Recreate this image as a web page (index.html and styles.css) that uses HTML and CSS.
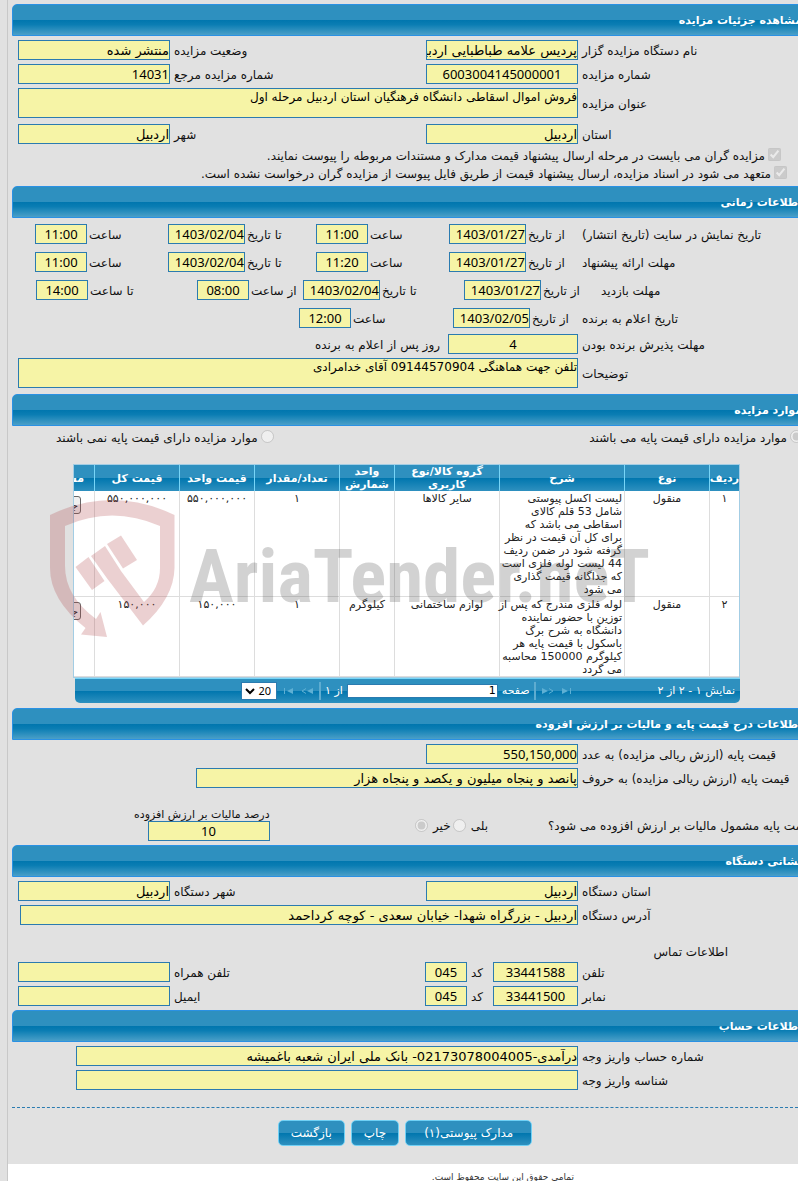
FILE: index.html
```html
<!DOCTYPE html>
<html lang="fa" dir="rtl">
<head>
<meta charset="utf-8">
<title>مشاهده جزئیات مزایده</title>
<link rel="stylesheet" href="styles.css">
</head>
<body>
<main class="panel">
  <section>
    <h2 class="bar">مشاهده جزئیات مزایده</h2>
    <div class="rows">
      <div class="row">
        <label class="lead" for="org">نام دستگاه مزایده گزار</label>
        <input class="field half" id="org" readonly value="پردیس علامه طباطبایی اردبیل">
        <label class="grow" for="status">وضعیت مزایده</label>
        <input class="field half" id="status" readonly value="منتشر شده">
      </div>
      <div class="row">
        <label class="lead" for="no">شماره مزایده</label>
        <input class="field half num center" id="no" readonly value="6003004145000001">
        <label class="grow" for="ref">شماره مزایده مرجع</label>
        <input class="field half num" id="ref" readonly value="14031">
      </div>
      <div class="row">
        <label class="lead" for="title">عنوان مزایده</label>
        <textarea class="field area" id="title" readonly>فروش اموال اسقاطی دانشگاه فرهنگیان استان اردبیل مرحله اول</textarea>
      </div>
      <div class="row spaced">
        <label class="lead" for="prov">استان</label>
        <input class="field half" id="prov" readonly value="اردبیل">
        <label class="grow" for="city">شهر</label>
        <input class="field half" id="city" readonly value="اردبیل">
      </div>
      <div class="checks">
        <label class="check inset"><input type="checkbox" checked disabled>مزایده گران می بایست در مرحله ارسال پیشنهاد قیمت مدارک و مستندات مربوطه را پیوست نمایند.</label>
        <label class="check"><input type="checkbox" checked disabled>متعهد می شود در اسناد مزایده، ارسال پیشنهاد قیمت از طریق فایل پیوست از مزایده گران درخواست نشده است.</label>
      </div>
    </div>
  </section>

  <section>
    <h2 class="bar">اطلاعات زمانی</h2>
    <div class="rows times">
      <div class="time">
        <span class="lead">تاریخ نمایش در سایت (تاریخ انتشار)</span>
        <label class="from" for="t1">از تاریخ</label><input class="field num date" id="t1" readonly value="1403/01/27">
        <label class="hour" for="t2">ساعت</label><input class="field num clock" id="t2" readonly value="11:00">
        <label class="to" for="t3">تا تاریخ</label><input class="field num date" id="t3" readonly value="1403/02/04">
        <label class="hour" for="t4">ساعت</label><input class="field num clock" id="t4" readonly value="11:00">
      </div>
      <div class="time">
        <span class="lead">مهلت ارائه پیشنهاد</span>
        <label class="from" for="t5">از تاریخ</label><input class="field num date" id="t5" readonly value="1403/01/27">
        <label class="hour" for="t6">ساعت</label><input class="field num clock" id="t6" readonly value="11:20">
        <label class="to" for="t7">تا تاریخ</label><input class="field num date" id="t7" readonly value="1403/02/04">
        <label class="hour" for="t8">ساعت</label><input class="field num clock" id="t8" readonly value="11:00">
      </div>
      <div class="time visit">
        <span class="lead">مهلت بازدید</span>
        <label class="from" for="t9">از تاریخ</label><input class="field num date" id="t9" readonly value="1403/01/27">
        <label class="to" for="t10">تا تاریخ</label><input class="field num date" id="t10" readonly value="1403/02/04">
        <label class="since" for="t11">از ساعت</label><input class="field num clock" id="t11" readonly value="08:00">
        <label class="until" for="t12">تا ساعت</label><input class="field num clock" id="t12" readonly value="14:00">
      </div>
      <div class="time winner">
        <span class="lead">تاریخ اعلام به برنده</span>
        <label class="from" for="t13">از تاریخ</label><input class="field num date" id="t13" readonly value="1403/02/05">
        <label class="hour" for="t14">ساعت</label><input class="field num clock" id="t14" readonly value="12:00">
      </div>
    </div>
    <div class="rows notes">
      <div class="row">
        <label class="lead" for="accept">مهلت پذیرش برنده بودن</label>
        <input class="field num center accept" id="accept" readonly value="4">
        <span class="unit">روز پس از اعلام به برنده</span>
      </div>
      <div class="row">
        <label class="lead" for="desc">توضیحات</label>
        <textarea class="field area" id="desc" readonly>تلفن جهت هماهنگی 09144570904 آقای خدامرادی</textarea>
      </div>
    </div>
  </section>

  <section>
    <h2 class="bar">موارد مزایده</h2>
    <div class="basis">
      <label class="choice"><input type="radio" name="basis" checked disabled>موارد مزایده دارای قیمت پایه می باشند</label>
      <label class="choice"><input type="radio" name="basis" disabled>موارد مزایده دارای قیمت پایه نمی باشند</label>
    </div>
    <div class="grid">
      <div class="viewport">
        <table class="items">
          <colgroup><col class="c-row"><col class="c-type"><col class="c-desc"><col class="c-group"><col class="c-unit"><col class="c-count"><col class="c-price"><col class="c-total"><col class="c-docs"></colgroup>
          <thead>
            <tr><th>ردیف</th><th>نوع</th><th>شرح</th><th>گروه کالا/نوع<br>کاربری</th><th>واحد<br>شمارش</th><th>تعداد/مقدار</th><th>قیمت واحد</th><th>قیمت کل</th><th class="start">مستندات</th></tr>
          </thead>
          <tbody>
            <tr>
              <td>۱</td><td>منقول</td>
              <td class="desc">لیست اکسل پیوستی<br>شامل 53 قلم کالای<br>اسقاطی می باشد که<br>برای کل آن قیمت در نظر<br>گرفته شود در ضمن ردیف<br>44 لیست لوله فلزی است<br>که جداگانه قیمت گذاری<br>می شود</td>
              <td>سایر کالاها</td><td></td><td>۱</td><td>۵۵۰,۰۰۰,۰۰۰</td><td>۵۵۰,۰۰۰,۰۰۰</td><td class="act"><button class="mini" type="button">جزئیات</button></td>
            </tr>
            <tr>
              <td>۲</td><td>منقول</td>
              <td class="desc">لوله فلزی مندرج که پس از<br>توزین با حضور نماینده<br>دانشگاه به شرح برگ<br>باسکول با قیمت پایه هر<br>کیلوگرم 150000 محاسبه<br>می گردد</td>
              <td>لوازم ساختمانی</td><td>کیلوگرم</td><td>۱</td><td>۱۵۰,۰۰۰</td><td>۱۵۰,۰۰۰</td><td class="act"><button class="mini" type="button">جزئیات</button></td>
            </tr>
          </tbody>
        </table>
      </div>
      <div class="pager">
        <span class="shown">نمایش ۱ - ۲ از ۲</span>
        <button class="nav last" type="button" aria-label="صفحه آخر"><svg width="10" height="8" viewBox="0 0 10 8"><path d="M0 1v6l6-3zM8 1h1v6h-1z"/></svg></button>
        <button class="nav" type="button" aria-label="صفحه بعد"><svg width="12" height="8" viewBox="0 0 12 8"><path d="M0 1v6l6-3z"/><path class="chev" d="M7 1.500l4 2.500-4 2.500"/></svg></button>
        <i class="sep"></i>
        <label for="page">صفحه</label>
        <input class="page" id="page" value="1">
        <span>از ۱</span>
        <i class="sep"></i>
        <button class="nav" type="button" aria-label="صفحه قبل"><svg width="12" height="8" viewBox="0 0 12 8"><path d="M12 1v6l-6-3z"/><path class="chev" d="M5 1.500l-4 2.500 4 2.500"/></svg></button>
        <button class="nav" type="button" aria-label="صفحه اول"><svg width="10" height="8" viewBox="0 0 10 8"><path d="M10 1v6l-6-3zM1 1h1v6h-1z"/></svg></button>
        <div class="size"><select aria-label="تعداد در صفحه"><option>20</option></select><svg width="10" height="7" viewBox="0 0 10 7"><path d="M1 1l4 4 4-4"/></svg></div>
      </div>
      <div class="watermark" aria-hidden="true">
        <svg class="shield" width="125" height="138" viewBox="0 0 125 138">
          <path d="M0 15Q62-15 124.500 15V68Q124 98 93 125.500L57.500 79 41 56 55 46 71 71 94 102Q110 88 110 68V26Q62 5 15 26V66Q15 96 46 119L50.500 112 57 137 31 134.500 35.500 128Q0 100 0 68Z"/>
          <path d="M25.500 67L38.500 57 54.500 81 42 90ZM57 44L71 35.500 87 60 73 68.500Z"/>
        </svg>
        <span class="brand">AriaTender.neT</span>
      </div>
    </div>
  </section>

  <section>
    <h2 class="bar">اطلاعات درج قیمت پایه و مالیات بر ارزش افزوده</h2>
    <div class="rows">
      <div class="row">
        <label class="lead" for="base">قیمت پایه (ارزش ریالی مزایده) به عدد</label>
        <input class="field half num" id="base" readonly value="550,150,000">
      </div>
      <div class="row short">
        <label class="lead" for="words">قیمت پایه (ارزش ریالی مزایده) به حروف</label>
        <input class="field wide" id="words" readonly value="پانصد و پنجاه میلیون و یکصد و پنجاه هزار">
      </div>
      <div class="vat">
        <span class="question">قیمت پایه مشمول مالیات بر ارزش افزوده می شود؟</span>
        <label class="choice yes">بلی<input type="radio" name="vat" disabled></label>
        <label class="choice no">خیر<input type="radio" name="vat" checked disabled></label>
        <div class="tax">
          <label for="tax">درصد مالیات بر ارزش افزوده</label>
          <input class="field num center" id="tax" readonly value="10">
        </div>
      </div>
    </div>
  </section>

  <section>
    <h2 class="bar">نشانی دستگاه</h2>
    <div class="rows">
      <div class="row">
        <label class="lead" for="oprov">استان دستگاه</label>
        <input class="field half" id="oprov" readonly value="اردبیل">
        <label class="grow" for="ocity">شهر دستگاه</label>
        <input class="field half" id="ocity" readonly value="اردبیل">
      </div>
      <div class="row address">
        <label class="lead" for="addr">آدرس دستگاه</label>
        <input class="field wide" id="addr" readonly value="اردبیل - بزرگراه شهدا- خیابان سعدی - کوچه کرداحمد">
      </div>
      <h3 class="contact">اطلاعات تماس</h3>
      <div class="row">
        <label class="lead" for="tel">تلفن</label>
        <input class="field num center phone" id="tel" readonly value="33441588">
        <label class="codelabel" for="tcode">کد</label>
        <input class="field num center code" id="tcode" readonly value="045">
        <label class="grow" for="mobile">تلفن همراه</label>
        <input class="field half" id="mobile" readonly>
      </div>
      <div class="row">
        <label class="lead" for="fax">نمابر</label>
        <input class="field num center phone" id="fax" readonly value="33441500">
        <label class="codelabel" for="fcode">کد</label>
        <input class="field num center code" id="fcode" readonly value="045">
        <label class="grow" for="mail">ایمیل</label>
        <input class="field half" id="mail" readonly>
      </div>
    </div>
  </section>

  <section>
    <h2 class="bar">اطلاعات حساب</h2>
    <div class="rows account">
      <div class="row">
        <label class="lead" for="acc">شماره حساب واریز وجه</label>
        <input class="field wide" id="acc" readonly value="درآمدی-02173078004005- بانک ملی ایران شعبه باغمیشه">
      </div>
      <div class="row">
        <label class="lead" for="accid">شناسه واریز وجه</label>
        <input class="field wide" id="accid" readonly>
      </div>
    </div>
  </section>

  <div class="actions">
    <button class="btn docs" type="button">مدارک پیوستی(۱)</button>
    <button class="btn" type="button">چاپ</button>
    <button class="btn" type="button">بازگشت</button>
  </div>
</main>
<footer class="foot">تمامی حقوق این سایت محفوظ است.</footer>
</body>
</html>
```

FILE: styles.css
```css
* { box-sizing: border-box; }

body {
  margin: 0;
  padding-left: 7px;
  height: 100vh;
  overflow: hidden;
  display: flex;
  flex-direction: column;
  background: #e1e1e1;
  color: #111;
  font: 12px/16px "DejaVu Sans", sans-serif;
}

input, textarea, select, button { font: inherit; color: inherit; margin: 0; }

.panel {
  flex: none;
  padding: 4px 0 18px 4px;
  border-left: 1px solid #c8c8c8;
  overflow: hidden;
}

.bar {
  height: 32px;
  margin: 0 -5px 0 0;
  border: 1px solid #2a91e4;
  border-radius: 5px 0 0 0;
  background: linear-gradient(#2e90bf 50%, #0076ae 50%, #0a7db3 65%, #4a9fc8);
  color: #fff;
  font-size: 11px;
  font-weight: bold;
  line-height: 32px;
  white-space: nowrap;
}

.rows { display: flex; flex-direction: column; gap: 4px; padding: 4px 0 4px 6px; }
.row { display: flex; align-items: center; gap: 4px; }
.row.spaced { margin-top: 2px; }
.row > label, .time > label, .lead, .unit { white-space: nowrap; }
.lead { flex: none; width: 216px; text-align: left; padding-top: 2px; }
.grow { flex: 1; text-align: left; padding-top: 2px; }

.field {
  display: block;
  flex: none;
  height: 20px;
  padding: 0;
  border: 1px solid #2b7bb0;
  border-radius: 0;
  background: #f6f4a6;
  color: #000;
  font-size: 13px;
  outline: none;
}
.half { width: 152px; }
.wide { flex: 1; min-width: 0; }
.area { flex: 1; min-width: 0; height: 30px; resize: none; overflow: hidden; font-size: 12px; line-height: 16px; }
.num { font-family: "Noto Sans", "DejaVu Sans", sans-serif; direction: ltr; text-align: right; }
.center { text-align: center; }

.checks { display: flex; flex-direction: column; gap: 2px; padding: 0 11px 0 0; }
.check { display: flex; align-items: center; gap: 3px; height: 16px; white-space: nowrap; }
.check input { width: 13px; height: 13px; margin-bottom: 3px; }
.inset { padding-right: 6px; }

.times { gap: 8px; padding: 6px 0 0 23px; }
.time { display: flex; align-items: center; }
.time label { flex: none; padding: 2px 0 0 2px; text-align: left; }
.date { width: 77px; }
.clock { width: 52px; text-align: center; }
.from { width: 56px; }
.time .hour { flex: 1 1 81px; }
.time .to { flex: 1 1 71px; }
.visit .lead { width: 197px; }
.visit .from { width: 60px; }
.visit .to { flex: 0 1 84px; }
.visit .since { width: 54px; }
.visit .until { flex: 1; }
.visit { padding-left: 1px; }
.winner .from { width: 52px; }
.winner .hour { flex: 0 1 102px; }
.notes { padding: 6px 0 6px 6px; }
.accept { width: 130px; }
.unit { padding: 2px 4px 0 0; }

.basis { display: flex; justify-content: space-between; margin: 3px -5px 0 44px; height: 17px; }
.choice { display: flex; align-items: center; gap: 3px; white-space: nowrap; }
.choice input { width: 13px; height: 13px; margin-bottom: 2px; }

.grid { position: relative; margin: 18px 58px 5px 61px; }
.viewport { overflow: hidden; border: 1px solid #a3cde4; background: #fff; }
.items { width: 734px; table-layout: fixed; border-collapse: separate; border-spacing: 0; line-height: 13px; color: #222; }
.c-row { width: 30px; }
.c-type, .c-total, .c-count { width: 85px; }
.c-desc { width: 125px; }
.c-group { width: 105px; }
.c-unit { width: 55px; }
.c-price { width: 75px; }
.c-docs { width: 89px; }
.items thead tr { background: linear-gradient(#2e90bf 50%, #0076ae 50%, #2e90bf); }
.items th { height: 26px; padding: 0; border-left: 1px solid #77d5f7; color: #fff; font-size: 11px; line-height: 13px; white-space: nowrap; }
.items .start { padding-right: 10px; text-align: right; }
.items td { padding: 1px 2px 0; border-left: 1px solid #ddd; border-bottom: 1px solid #ddd; text-align: center; vertical-align: top; white-space: nowrap; font-size: 11px; }
.items .desc { padding-left: 0; text-align: right; }
.items .act { padding: 5px 13px 0 0; text-align: right; }
.mini { height: 18px; width: 60px; padding: 0 2px; border: 1px solid #666; border-radius: 3px; background: #efefef; text-align: right; }

.pager {
  display: flex;
  align-items: center;
  gap: 4px;
  height: 25px;
  margin-left: 2px;
  padding: 0 5px 0 166px;
  border-top: 1px solid #77d5f7;
  border-radius: 0 0 5px 5px;
  background: linear-gradient(#2e90bf 50%, #0076ae 50%, #2e90bf);
  color: #fff;
  font-size: 11px;
  white-space: nowrap;
}
.last { margin-right: auto; }
.nav { display: flex; padding: 0 2px; border: 0; background: none; }
.nav svg { fill: #5eb0d4; }
.nav .chev { fill: none; stroke: #5eb0d4; }
.sep { width: 2px; height: 18px; background: #5eacd0; }
.page { width: 151px; height: 14px; padding: 0 1px; border: 1px solid #2b7bb0; background: #fff; color: #000; direction: ltr; text-align: right; }
.size { position: relative; color: #000; }
.size select { display: block; width: 36px; height: 18px; padding: 0 5px 0 0; border: 1px solid #2b7bb0; border-radius: 0; background: #fff; font: 11px/16px "Noto Sans", sans-serif; appearance: none; }
.size svg { position: absolute; left: 4px; top: 6px; fill: none; stroke: #000; stroke-width: 2; pointer-events: none; }

.watermark { position: absolute; left: -23px; top: 36px; display: flex; direction: ltr; pointer-events: none; }
.shield { fill: rgba(175, 67, 71, .25); }
.brand { margin: 36px 0 0 14px; color: rgba(75, 75, 75, .25); font: bold 75px/80px "Roboto Condensed", Roboto, sans-serif; white-space: nowrap; }

.short { padding-left: 178px; }
.vat { display: flex; align-items: flex-end; margin: 16px -20px 0 0; white-space: nowrap; }
.question { width: 270px; text-align: left; padding-bottom: 7px; }
.vat .choice { gap: 5px; padding-bottom: 7px; }
.yes { margin-right: 60px; }
.vat .no { margin-right: 2px; }
.tax { margin-right: auto; margin-left: 116px; line-height: 13px; font-size: 11px; }
.tax label { display: block; }
.tax .field { width: 122px; }

.address { padding-left: 2px; }
.contact { margin: 17px 70px 0 0; font-size: 12px; font-weight: normal; line-height: 12px; }
.phone { width: 85px; }
.code { width: 42px; }
.codelabel { width: 18px; padding-top: 2px; text-align: left; }
.account { padding-left: 64px; padding-bottom: 17px; }

.actions { display: flex; justify-content: center; gap: 6px; padding-top: 12px; border-top: 1px dashed #2b7bb0; }
.btn {
  height: 26px;
  padding: 0 12px;
  border: 1px solid #6fd0f5;
  border-radius: 5px;
  background: linear-gradient(#2e90bf 50%, #0076ae 50%, #2e90bf);
  color: #fff;
  white-space: nowrap;
}
.docs { padding: 0 18px; }

.foot { flex: 1; padding: 6px 224px 0 0; border-left: 1px solid #c8c8c8; background: #fff; color: #333; font-size: 9px; line-height: 14px; }
```
